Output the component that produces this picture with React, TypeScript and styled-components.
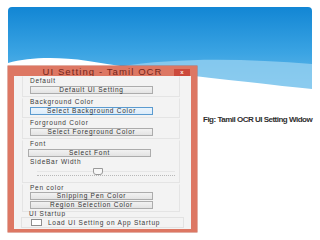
import React from "react";
import styled, { createGlobalStyle } from "styled-components";

const GlobalStyle = createGlobalStyle`
  html, body { margin: 0; padding: 0; background: #ffffff; }
  body { font-family: "Liberation Sans", Arial, sans-serif; }
`;

const Slide = styled.div`
  position: relative;
  width: 320px;
  height: 240px;
  overflow: hidden;
  background: #ffffff;
`;

const HeaderArt = styled.svg`
  position: absolute;
  left: 8px;
  top: 7px;
`;

const Content = styled.div`
  position: relative;
  display: flex;
  align-items: flex-start;
  padding: 66px 0 0 8px;
`;

const Window = styled.div`
  width: 189px;
  height: 166px;
  background: #dd7763;
  display: flex;
  flex-direction: column;
  box-sizing: border-box;
  box-shadow: 0 0 0 0.5px #c8604c;
`;

const TitleBar = styled.div`
  height: 10px;
  display: grid;
  grid-template-columns: 1fr auto 1fr;
  align-items: center;
`;

const Title = styled.div`
  grid-column: 2;
  font-size: 9.5px;
  line-height: 10px;
  letter-spacing: 1.1px;
  color: #74261b;
  white-space: nowrap;
  padding-top: 1px;
`;

const CloseButton = styled.div`
  grid-column: 3;
  justify-self: end;
  margin-right: 7px;
  margin-top: 2px;
  width: 16px;
  height: 7px;
  background: #cc4a3c;
  display: flex;
  align-items: center;
  justify-content: center;
  color: #fbe3de;
  font-size: 6px;
  line-height: 7px;
  font-weight: bold;
`;

const Client = styled.div`
  flex: 1;
  margin: 0 6px 3px 6px;
  background: #f3f3f3;
  padding: 0 11px 0 8px;
  display: flex;
  flex-direction: column;
  font-size: 6.5px;
  letter-spacing: 0.75px;
  color: #3a3a3a;
`;

const Group = styled.div<{ $gap?: number }>`
  border: 1px solid #e4e4e4;
  border-top-color: transparent;
  margin-top: ${(p) => p.$gap ?? 0}px;
  padding: 0 0 2px 7px;
  display: flex;
  flex-direction: column;
  box-sizing: border-box;
`;

const Label = styled.div<{ $mt?: number }>`
  height: 6px;
  line-height: 6px;
  margin-top: ${(p) => p.$mt ?? 0}px;
  white-space: nowrap;
`;

const Button = styled.div<{ $focused?: boolean; $shift?: number; $mt?: number }>`
  margin-top: ${(p) => p.$mt ?? 2}px;
  margin-left: ${(p) => p.$shift ?? 0}px;
  width: 123px;
  height: 8px;
  box-sizing: border-box;
  border: 1px solid ${(p) => (p.$focused ? "#5b9bd0" : "#acacac")};
  background: ${(p) =>
    p.$focused
      ? "linear-gradient(#eaf4fc, #dcecfa)"
      : "linear-gradient(#f2f2f2, #e3e3e3)"};
  display: flex;
  align-items: center;
  justify-content: center;
  line-height: 6px;
  white-space: nowrap;
  color: #333;
`;

const SliderArea = styled.div`
  position: relative;
  height: 13px;
  margin: 2px 4px 0 7px;
`;

const Track = styled.div`
  position: absolute;
  left: 0;
  right: 0;
  top: 4px;
  border-top: 1px solid #e6e6e6;
`;

const Ticks = styled.div`
  position: absolute;
  left: 0;
  right: 0;
  top: 8px;
  border-top: 1px dotted #b8b8b8;
`;

const Thumb = styled.div`
  position: absolute;
  left: 56px;
  top: 1px;
  width: 8px;
  height: 5px;
  border: 1px solid #9a9a9a;
  border-radius: 0 0 3px 3px;
  background: #f7f7f7;
`;

const StartupGroup = styled.div`
  padding-left: 7px;
  display: flex;
  flex-direction: column;
  margin-top: -1px;
`;

const StartupBox = styled.div`
  margin: 0 -4px 0 -8px;
  border: 1px solid #e2e2e2;
  height: 11px;
  box-sizing: border-box;
  display: flex;
  align-items: center;
  padding-left: 9px;
  gap: 6px;
`;

const Check = styled.div`
  width: 9px;
  height: 5px;
  border: 1px solid #8e8e8e;
  background: #ffffff;
`;

const Caption = styled.div`
  margin: 50px 0 0 6px;
  font-size: 8px;
  line-height: 8px;
  font-weight: bold;
  letter-spacing: -0.5px;
  color: #2f2f2f;
  white-space: nowrap;
`;

export default function App() {
  return (
    <Slide>
      <GlobalStyle />
      <HeaderArt width="304" height="84" viewBox="0 0 304 84">
        <defs>
          <linearGradient id="sky" x1="0" y1="0" x2="0" y2="1">
            <stop offset="0" stopColor="#1286d4" />
            <stop offset="0.55" stopColor="#3ba4e3" />
            <stop offset="1" stopColor="#6dbdea" />
          </linearGradient>
        </defs>
        <path d="M0 4 Q0 0 4 0 H300 Q304 0 304 4 V84 H0 Z" fill="url(#sky)" />
        <path
          d="M110 60 C170 50 240 52 304 57 V84 H110 Z"
          fill="#93cff0"
          opacity="0.8"
        />
        <path
          d="M0 56 C20 51 45 49 80 54 C130 62 190 70 240 75 C265 78 285 80 304 82 V84 H0 Z"
          fill="#ffffff"
        />
      </HeaderArt>
      <Content>
        <Window>
          <TitleBar>
            <Title>UI Setting - Tamil OCR</Title>
            <CloseButton>x</CloseButton>
          </TitleBar>
          <Client>
            <Group>
              <Label $mt={1}>Default</Label>
              <Button>Default UI Setting</Button>
            </Group>
            <Group $gap={1}>
              <Label>Background Color</Label>
              <Button $focused>Select Background Color</Button>
            </Group>
            <Group $gap={1}>
              <Label>Forground Color</Label>
              <Button>Select Foreground Color</Button>
            </Group>
            <Group $gap={1}>
              <Label>Font</Label>
              <Button $shift={-2}>Select Font</Button>
              <Label $mt={2}>SideBar Width</Label>
              <SliderArea>
                <Track />
                <Ticks />
                <Thumb />
              </SliderArea>
            </Group>
            <Group $gap={1}>
              <Label>Pen color</Label>
              <Button $mt={1}>Snipping Pen Color</Button>
              <Button $mt={1}>Region Selection Color</Button>
            </Group>
            <StartupGroup>
              <Label>UI Startup</Label>
              <StartupBox>
                <Check />
                <span>Load UI Setting on App Startup</span>
              </StartupBox>
            </StartupGroup>
          </Client>
        </Window>
        <Caption>Fig: Tamil OCR UI Setting Widow</Caption>
      </Content>
    </Slide>
  );
}
